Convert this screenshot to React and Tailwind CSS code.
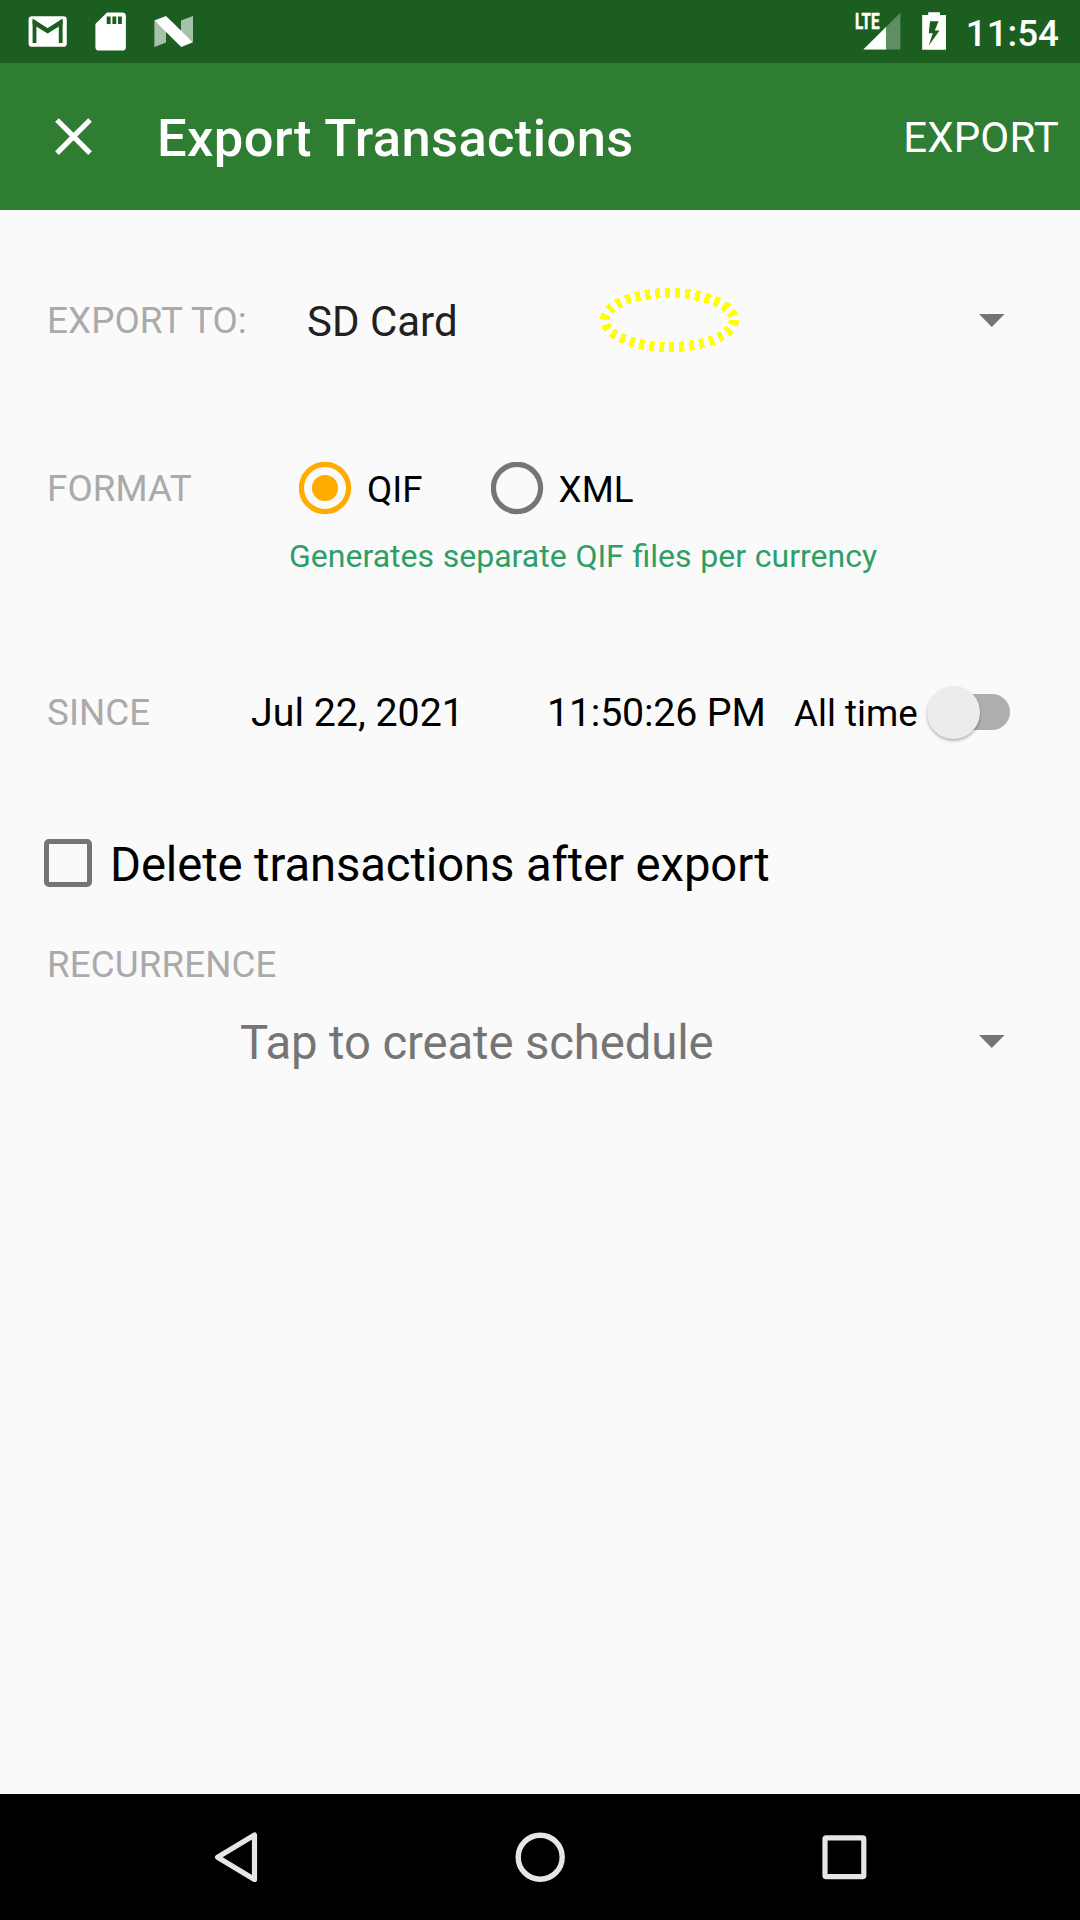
import React from "react";

const label = "pt-[3px] text-[36.75px] text-[#aaaaaa] leading-none whitespace-nowrap tracking-[0.1px]";

function GmailIcon() {
  return (
    <svg className="block h-[63px] w-[39px]" viewBox="28 0 39 63">
      <rect x="28.6" y="16.2" width="38.2" height="30.6" rx="3.4" fill="#fff" />
      <path d="M34.5 43V22L47.6 30.6L60.7 22V43" fill="none" stroke="#1b5e20" strokeWidth="3.8" />
      <path d="M32.6 20.2h1.4L47.6 28.2L61.2 20.2h1.4v4L47.6 33.6L32.6 24.2z" fill="#1b5e20" />
    </svg>
  );
}

function SdIcon() {
  return (
    <svg className="block h-[63px] w-[32px]" viewBox="95 0 32 63">
      <path
        fillRule="evenodd"
        fill="#fff"
        d="M107 12.6h15.2a3.7 3.7 0 0 1 3.7 3.7v30.6a3.7 3.7 0 0 1-3.7 3.7H99.1a3.7 3.7 0 0 1-3.7-3.7V24zM106.7 16.4v7.6h3.9v-7.6zM112.4 16.4v7.6h3.9v-7.6zM118 16.4v7.6h3.9v-7.6z"
      />
    </svg>
  );
}

function NougatIcon() {
  return (
    <svg className="block h-[63px] w-[39px]" viewBox="154 0 39 63" fill="#fff">
      <path d="M154.4 20.5L166 31v11.4l-11.6 4.6z" opacity=".62" />
      <path d="M181 20.6l12-4.6v26L181 31z" opacity=".62" />
      <path d="M154.4 20.6L166 16l27 26.2L181.2 47z" />
    </svg>
  );
}

function SignalIcon() {
  return (
    <svg className="block h-[63px] w-[48px]" viewBox="854 0 48 63" fill="#fff">
      <path d="M863.4 49.5L900.4 12.8v36.7z" opacity=".3" />
      <path d="M863.4 49.5L886 27v22.5z" />
      <text x="855" y="29.2" fontFamily="Roboto" fontWeight="700" fontSize="22.5" textLength="24.5" lengthAdjust="spacingAndGlyphs" stroke="#fff" strokeWidth="0.6">
        LTE
      </text>
    </svg>
  );
}

function BatteryIcon() {
  return (
    <svg className="block h-[63px] w-[24px]" viewBox="922 0 24 63">
      <path
        fillRule="evenodd"
        fill="#fff"
        d="M922.2 15h6v-2.8h11.7V15h6.1v34.7h-23.8zM930 21.2l-1.2 12h4l-4.2 12.6 11-15.4h-4.8l3.8-9.2z"
      />
    </svg>
  );
}

function Caret() {
  return (
    <svg className="block h-[13px] w-[26px] shrink-0" viewBox="0 0 26 13">
      <path d="M0 0h25.6L12.8 13z" fill="#757575" />
    </svg>
  );
}

function Radio({ checked, children }) {
  return (
    <div className="flex items-center gap-[15px]">
      <svg className="block size-[53px]" viewBox="-26 -26 53 53">
        <circle r="23.6" fill="none" strokeWidth="5.25" stroke={checked ? "#ffab00" : "#757575"} />
        {checked && <circle r="13.1" fill="#ffab00" />}
      </svg>
      <span className="whitespace-nowrap pt-[4px] text-[36.75px] leading-none text-black">{children}</span>
    </div>
  );
}

export default function App() {
  return (
    <div className="flex h-[1920px] w-[1080px] flex-col overflow-hidden bg-[#fafafa] font-['Roboto',sans-serif]">
      <div className="flex h-[63px] shrink-0 items-center bg-[#1b5e20] pl-[28px] pr-[21px] text-white">
        <GmailIcon />
        <div className="w-[28px]" />
        <SdIcon />
        <div className="w-[27px]" />
        <NougatIcon />
        <div className="ml-auto flex items-center">
          <SignalIcon />
          <div className="w-[20px]" />
          <BatteryIcon />
          <span className="ml-[20px] pt-[5px] text-[36.75px] font-medium leading-none">11:54</span>
        </div>
      </div>

      <header className="flex h-[147px] shrink-0 items-center bg-[#2e7d32] pl-[42px] pr-[21px] text-white">
        <svg className="block size-[63px]" viewBox="0 0 24 24" fill="#fff">
          <path d="M19 6.41L17.59 5 12 10.59 6.41 5 5 6.41 10.59 12 5 17.59 6.41 19 12 13.41 17.59 19 19 17.59 13.41 12z" />
        </svg>
        <h1 className="ml-[52px] pt-[4px] text-[52.5px] font-medium leading-none tracking-[0.38px]">Export Transactions</h1>
        <span className="ml-auto pt-[2px] text-[42px] leading-none tracking-[0.15px]">EXPORT</span>
      </header>

      <main className="flex flex-1 flex-col pl-[47px]">
        <div className="mt-[60px] flex h-[100px] items-center">
          <span className={label + " w-[260px]"}>EXPORT TO:</span>
          <span className="w-[292px] pt-[3px] text-[42px] leading-none text-[#212121]">SD Card</span>
          <svg className="block h-[66px] w-[142px]" viewBox="599 287 142 66" shapeRendering="crispEdges">
            <ellipse cx="669.5" cy="320" rx="64.5" ry="27" fill="none" stroke="#ffff00" strokeWidth="10" strokeDasharray="5 5" />
          </svg>
          <div className="ml-auto pr-[75px]">
            <Caret />
          </div>
        </div>

        <div className="mt-[67px] flex h-[102px] items-center">
          <span className={label + " w-[252px]"}>FORMAT</span>
          <Radio checked>QIF</Radio>
          <div className="w-[68px]" />
          <Radio>XML</Radio>
        </div>
        <p className="-mt-px ml-[242px] h-[37px] text-[32px] leading-[36px] text-[#2e9e66] [word-spacing:0.8px]">
          Generates separate QIF files per currency
        </p>

        <div className="mt-[87px] flex h-[100px] items-center">
          <span className={label + " w-[204px]"}>SINCE</span>
          <span className="w-[296px] whitespace-nowrap pt-[2px] text-[39.375px] leading-none text-black">Jul 22, 2021</span>
          <span className="w-[247px] whitespace-nowrap pt-[2px] text-[39.375px] leading-none tracking-[-0.2px] text-black">11:50:26 PM</span>
          <span className="w-[133px] whitespace-nowrap pt-[4px] text-[36.75px] leading-none text-black">All time</span>
          <div className="flex h-[36px] w-[83px] items-center rounded-full bg-gradient-to-r from-transparent from-30% to-[#aeaeae] to-30%">
            <div className="size-[53px] shrink-0 rounded-full bg-[#ececec] shadow-[0_2px_3px_rgba(0,0,0,0.28)]" />
          </div>
        </div>

        <div className="-ml-[3px] mt-[51px] flex h-[100px] items-center">
          <div className="size-[48px] rounded-[5px] border-[5.25px] border-[#757575]" />
          <span className="ml-[18px] pt-[6px] text-[47.25px] leading-none tracking-[-0.11px] text-black">Delete transactions after export</span>
        </div>

        <div className="mt-[32px] flex h-[38px] items-center">
          <span className={label}>RECURRENCE</span>
        </div>

        <div className="mt-[8px] flex h-[100px] items-center">
          <span className="ml-[193px] pt-[5px] text-[47.25px] leading-none tracking-[-0.11px] text-[#757575]">Tap to create schedule</span>
          <div className="ml-auto pr-[75px]">
            <Caret />
          </div>
        </div>
      </main>

      <nav className="flex h-[126px] shrink-0 items-center justify-center gap-[241px] bg-black">
        <svg className="block size-[63px]" viewBox="0 0 63 63" fill="none" stroke="#e6e6e6" strokeWidth="5.2" strokeLinejoin="round">
          <path d="M12.6 31.2L49.5 9.1V53.5z" />
        </svg>
        <svg className="block size-[63px]" viewBox="0 0 63 63" fill="none" stroke="#e6e6e6" strokeWidth="5.4">
          <circle cx="31.2" cy="31.2" r="22" />
        </svg>
        <svg className="block size-[63px]" viewBox="0 0 63 63" fill="none" stroke="#e6e6e6" strokeWidth="5.2">
          <rect x="12" y="11.8" width="38.8" height="38.8" rx="1.2" />
        </svg>
      </nav>
    </div>
  );
}
